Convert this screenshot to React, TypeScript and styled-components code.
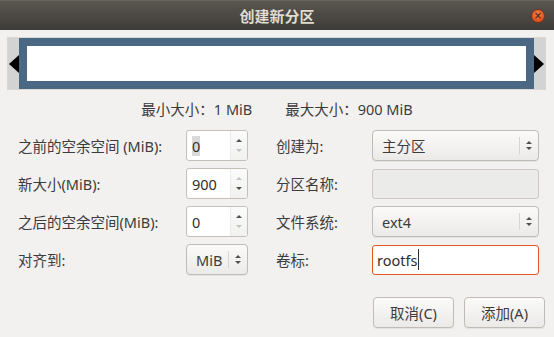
import React from "react";
import styled, { createGlobalStyle } from "styled-components";

const GlobalStyle = createGlobalStyle`
  html, body {
    margin: 0;
    padding: 0;
    background: #f2f1f0;
  }
  body {
    font-family: "Noto Sans", "Noto Sans CJK SC", sans-serif;
    font-size: 14.5px;
    color: #3c3c3c;
  }
`;

const Dialog = styled.div`
  width: 554px;
  height: 337px;
  display: flex;
  flex-direction: column;
  background: #f2f1f0;
  overflow: hidden;
`;

const TitleBar = styled.div`
  height: 30px;
  flex: none;
  display: grid;
  grid-template-columns: 1fr auto 1fr;
  align-items: center;
  background: linear-gradient(#5a5650, #3e3c38);
  border-top: 1px solid #6a655e;
  box-sizing: border-box;
`;

const Title = styled.div`
  grid-column: 2;
  font-family: "Noto Sans CJK SC", sans-serif;
  font-weight: 700;
  font-size: 15px;
  color: #dfdbd2;
  letter-spacing: 0;
`;

const CloseButton = styled.div`
  grid-column: 3;
  justify-self: end;
  margin-right: 9px;
  width: 14px;
  height: 14px;
  border-radius: 50%;
  background: radial-gradient(circle at 50% 35%, #f5814f, #e0531d 70%, #c9461a);
  border: 1px solid #7a3317;
  box-sizing: border-box;
  display: flex;
  align-items: center;
  justify-content: center;
  color: #3a1a0d;
  font-family: "DejaVu Sans", sans-serif;
  font-size: 10px;
  line-height: 1;
`;

const PartitionBar = styled.div`
  margin: 7px 8px 0 7px;
  height: 53px;
  box-sizing: border-box;
  border: 1px solid #d9d7d3;
  background: #d3d3d3;
  display: flex;
  align-items: stretch;
`;

const ArrowSlot = styled.div`
  width: 11px;
  display: flex;
  align-items: center;
  justify-content: ${(p: { $side: "left" | "right" }) => (p.$side === "left" ? "flex-end" : "flex-start")};
`;

const BigArrow = styled.div<{ $side: "left" | "right" }>`
  width: 0;
  height: 0;
  border-top: 9px solid transparent;
  border-bottom: 9px solid transparent;
  ${(p) => (p.$side === "left" ? "border-right: 10px solid #000;" : "border-left: 10px solid #000;")}
`;

const PartitionFrame = styled.div`
  flex: 1;
  border: 8px solid #4a6783;
  background: #fff;
`;

const InfoRow = styled.div`
  margin-top: 9px;
  height: 18px;
  display: flex;
  justify-content: center;
  align-items: center;
  gap: 33px;
  font-size: 14.5px;
  color: #3c3c3c;
`;

const Form = styled.div`
  margin-top: 13px;
  padding-left: 18px;
  display: flex;
  gap: 28px;
`;

const Panel = styled.div<{ $cols: string }>`
  display: grid;
  grid-template-columns: ${(p) => p.$cols};
  grid-auto-rows: 31px;
  row-gap: 7px;
  align-items: center;
`;

const Label = styled.div`
  color: #3c3c3c;
  white-space: nowrap;
`;

const SpinBox = styled.div`
  height: 31px;
  box-sizing: border-box;
  display: flex;
  border: 1px solid #c4bfb9;
  border-radius: 3px;
  background: #fff;
  overflow: hidden;
`;

const SpinText = styled.div`
  flex: 1;
  display: flex;
  align-items: center;
  padding-left: 5px;
  color: #2e2e2e;
`;

const Selected = styled.span`
  background: #dadada;
`;

const SpinButtons = styled.div`
  width: 16px;
  display: flex;
  flex-direction: column;
  align-items: center;
  justify-content: center;
  gap: 7px;
  background: linear-gradient(#fbfbfb, #f1f1f0);
  border-left: 1px solid #ecebea;
`;

const Tri = styled.div<{ $dir: "up" | "down"; $off?: boolean }>`
  width: 0;
  height: 0;
  border-left: 3px solid transparent;
  border-right: 3px solid transparent;
  ${(p) =>
    p.$dir === "up"
      ? `border-bottom: 3px solid ${p.$off ? "#c2c2c2" : "#505050"};`
      : `border-top: 3px solid ${p.$off ? "#c2c2c2" : "#505050"};`}
`;

const Combo = styled.div`
  height: ${(p: { $h?: number }) => p.$h ?? 31}px;
  box-sizing: border-box;
  display: flex;
  align-items: center;
  border: 1px solid #c0bbb5;
  border-radius: 4px;
  background: linear-gradient(#fafaf9, #eceae8);
  box-shadow: 0 1px 0 rgba(0, 0, 0, 0.06);
  color: #3c3c3c;
`;

const ComboText = styled.div`
  flex: 1;
  padding-left: 9px;
`;

const ComboSep = styled.div`
  width: 1px;
  align-self: stretch;
  margin: 6px 0;
  background: #d8d5d1;
`;

const ComboArrows = styled.div`
  width: 18px;
  display: flex;
  flex-direction: column;
  align-items: center;
  gap: 3px;
`;

const Entry = styled.div<{ $disabled?: boolean; $focus?: boolean }>`
  height: 30px;
  box-sizing: border-box;
  display: flex;
  align-items: center;
  padding-left: 4px;
  border-radius: 3px;
  border: 1px solid ${(p) => (p.$focus ? "#e6561f" : "#cdc8c2")};
  background: ${(p) => (p.$disabled ? "#ebebea" : "#fff")};
  color: #2e2e2e;
`;

const Caret = styled.span`
  display: inline-block;
  width: 1px;
  height: 21px;
  margin-left: 1px;
  background: #2e2e2e;
`;

const ButtonRow = styled.div`
  margin-top: 22px;
  padding-right: 9px;
  display: flex;
  justify-content: flex-end;
  gap: 10px;
`;

const Button = styled.div`
  width: 81px;
  height: 31px;
  box-sizing: border-box;
  display: flex;
  align-items: center;
  justify-content: center;
  border: 1px solid #c0bbb5;
  border-radius: 4px;
  background: linear-gradient(#fafaf9, #eceae8);
  box-shadow: 0 1px 0 rgba(0, 0, 0, 0.06);
  color: #3c3c3c;
`;

const Spin: React.FC<{ value: React.ReactNode; upOff?: boolean; downOff?: boolean }> = ({
  value,
  upOff,
  downOff,
}) => (
  <SpinBox>
    <SpinText>{value}</SpinText>
    <SpinButtons>
      <Tri $dir="up" $off={upOff} />
      <Tri $dir="down" $off={downOff} />
    </SpinButtons>
  </SpinBox>
);

const Select: React.FC<{ text: string }> = ({ text }) => (
  <Combo>
    <ComboText>{text}</ComboText>
    <ComboSep />
    <ComboArrows>
      <Tri $dir="up" />
      <Tri $dir="down" />
    </ComboArrows>
  </Combo>
);

const App: React.FC = () => {
  return (
    <Dialog>
      <GlobalStyle />
      <TitleBar>
        <Title>创建新分区</Title>
        <CloseButton>×</CloseButton>
      </TitleBar>

      <PartitionBar>
        <ArrowSlot $side="left">
          <BigArrow $side="left" />
        </ArrowSlot>
        <PartitionFrame />
        <ArrowSlot $side="right">
          <BigArrow $side="right" />
        </ArrowSlot>
      </PartitionBar>

      <InfoRow>
        <span>最小大小：1 MiB</span>
        <span>最大大小：900 MiB</span>
      </InfoRow>

      <Form>
        <Panel $cols="168px 62px">
          <Label>之前的空余空间 (MiB):</Label>
          <Spin value={<Selected>0</Selected>} downOff />
          <Label>新大小(MiB):</Label>
          <Spin value="900" upOff />
          <Label>之后的空余空间(MiB):</Label>
          <Spin value="0" downOff />
          <Label>对齐到:</Label>
          <Select text="MiB" />
        </Panel>
        <Panel $cols="96px 167px">
          <Label>创建为:</Label>
          <Select text="主分区" />
          <Label>分区名称:</Label>
          <Entry $disabled />
          <Label>文件系统:</Label>
          <Select text="ext4" />
          <Label>卷标:</Label>
          <Entry $focus>
            rootfs
            <Caret />
          </Entry>
        </Panel>
      </Form>

      <ButtonRow>
        <Button>取消(C)</Button>
        <Button>添加(A)</Button>
      </ButtonRow>
    </Dialog>
  );
};

export default App;
